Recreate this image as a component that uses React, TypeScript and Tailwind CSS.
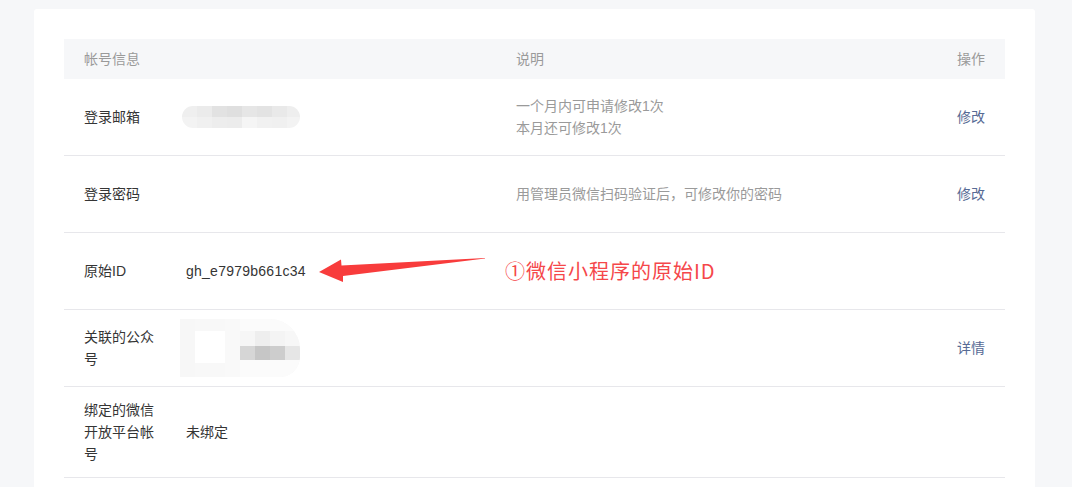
import React from "react";

const font = { fontFamily: '"Liberation Sans", "Noto Sans CJK SC", sans-serif' };

type Row = {
  label: React.ReactNode;
  value?: React.ReactNode;
  desc?: React.ReactNode;
  action?: string;
};

const EmailMask = () => (
  <div className="flex flex-col w-[118px] h-[22px] -ml-[4px] rounded-full overflow-hidden blur-[0.6px]">
    <div className="flex h-[11px]">
      <div className="w-[15px] bg-[#efefef]" />
      <div className="w-[15px] bg-[#ebebeb]" />
      <div className="w-[15px] bg-[#e2e2e2]" />
      <div className="w-[15px] bg-[#dfdfdf]" />
      <div className="w-[15px] bg-[#e6e6e6]" />
      <div className="w-[15px] bg-[#e3e3e3]" />
      <div className="w-[15px] bg-[#e9e9e9]" />
      <div className="w-[13px] bg-[#eeeeee]" />
    </div>
    <div className="flex h-[11px]">
      <div className="w-[15px] bg-[#f3f3f3]" />
      <div className="w-[15px] bg-[#f0f0f0]" />
      <div className="w-[15px] bg-[#ededed]" />
      <div className="w-[15px] bg-[#ececec]" />
      <div className="w-[15px] bg-[#f5f5f5]" />
      <div className="w-[15px] bg-[#f1f1f1]" />
      <div className="w-[15px] bg-[#f0f0f0]" />
      <div className="w-[13px] bg-[#f3f3f3]" />
    </div>
  </div>
);

const AvatarMask = () => (
  <div className="flex w-[120px] h-[58px] -ml-[6px] -my-[5px] rounded-tr-[30px] rounded-br-[20px] overflow-hidden blur-[0.6px] bg-[#fafafa]">
    <div className="w-[15px] bg-[#f7f7f7]" />
    <div className="w-[30px] flex flex-col">
      <div className="h-[12px] bg-[#f8f8f8]" />
      <div className="h-[32px] bg-white" />
      <div className="h-[14px] bg-[#f8f8f8]" />
    </div>
    <div className="w-[15px] bg-[#f9f9f9]" />
    <div className="w-[60px] flex flex-col">
      <div className="h-[12px] bg-[#fbfbfb]" />
      <div className="h-[15px] flex">
        <div className="w-[15px] bg-[#f6f6f6]" />
        <div className="w-[15px] bg-[#eeeeee]" />
        <div className="w-[15px] bg-[#f4f4f4]" />
        <div className="w-[15px] bg-[#f7f7f7]" />
      </div>
      <div className="h-[14px] flex">
        <div className="w-[15px] bg-[#d6d6d6]" />
        <div className="w-[15px] bg-[#c6c6c6]" />
        <div className="w-[15px] bg-[#cdcdcd]" />
        <div className="w-[15px] bg-[#e6e6e6]" />
      </div>
      <div className="flex-1 bg-[#fbfbfb]" />
    </div>
  </div>
);

const rows: Row[] = [
  {
    label: "登录邮箱",
    value: <EmailMask />,
    desc: (
      <>
        <div>一个月内可申请修改1次</div>
        <div>本月还可修改1次</div>
      </>
    ),
    action: "修改",
  },
  { label: "登录密码", desc: "用管理员微信扫码验证后，可修改你的密码", action: "修改" },
  { label: "原始ID", value: <span className="text-[#353535] tracking-[0.25px]">gh_e7979b661c34</span> },
  { label: "关联的公众号", value: <AvatarMask />, action: "详情" },
  { label: "绑定的微信开放平台帐号", value: <span className="text-[#353535]">未绑定</span> },
];

export default function App() {
  return (
    <div className="relative w-[1072px] h-[487px] overflow-hidden bg-[#f6f7f9] pt-[9px] pl-[34px]" style={font}>
      <div className="w-[1001px] min-h-[600px] bg-white rounded-[3px] px-[30px] pt-[30px] text-[14px] leading-[22px]">
        <div className="grid grid-cols-[452px_1fr_auto] items-center h-[40px] bg-[#f6f7f9] text-[#9a9a9a]">
          <div className="pl-5">帐号信息</div>
          <div>说明</div>
          <div className="pr-5">操作</div>
        </div>
        {rows.map((r, i) => (
          <div key={i} className="grid grid-cols-[452px_1fr_auto] items-center min-h-[77px] py-3 border-b border-[#e7e7eb]">
            <div className="flex items-center pl-5">
              <div className="w-[76px] text-[#353535]">{r.label}</div>
              <div className="ml-[26px]">{r.value}</div>
            </div>
            <div className="text-[#9a9a9a]">{r.desc}</div>
            <div className="pr-5 text-[#576b95]">{r.action}</div>
          </div>
        ))}
      </div>

      <svg className="absolute left-0 top-0" width="1072" height="487" viewBox="0 0 1072 487">
        <polygon
          points="485,258 341.5,265.5 341,259.5 319,272 343,282 343,276 485,258.6"
          fill="#f83c3c"
        />
      </svg>
      <div
        className="absolute left-[505px] top-[257px] text-[20px] leading-[28px] tracking-[1px] text-[#f5474a]"
        style={{ fontFamily: '"Noto Sans CJK SC", "Liberation Sans", sans-serif' }}
      >
        ①微信小程序的原始ID
      </div>
    </div>
  );
}
